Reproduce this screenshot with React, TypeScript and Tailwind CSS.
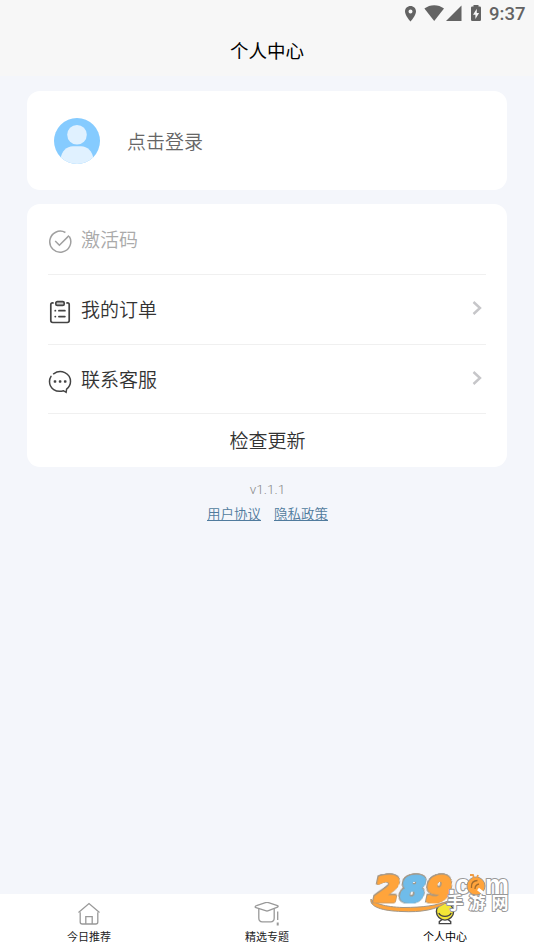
import type { ReactNode } from 'react';
import { clsx } from 'clsx';

/* ── status bar ──────────────────────────────────────────── */

function StatusBar() {
  return (
    <div className="flex h-7 justify-end">
      <svg className="h-7 w-[84px]" viewBox="0 0 84 28" fill="#636363">
        <path
          fillRule="evenodd"
          d="M10.5 6C7.4 6 5 8.4 5 11.4c0 4 5.5 10.1 5.5 10.1S16 15.400 16 11.400C16 8.400 13.600 6 10.500 6Zm0 3.500a2 2 0 1 1 0 4 2 2 0 0 1 0-4Z"
        />
        <path d="M24.400 8.600C30 4 38.400 4 44 8.600L34.200 21Z" />
        <path d="M61.500 5.500V21H46Z" />
        <path
          fillRule="evenodd"
          d="M73.500 5h5v1.600h1.300q1.200 0 1.200 1.200v12q0 1.200-1.200 1.200h-7.600q-1.200 0-1.200-1.200v-12q0-1.200 1.200-1.200h1.300ZM76.800 8.800l-3.800 6h2.400v4.200l3.700-6h-2.300Z"
        />
      </svg>
      <span className="w-[50px] pt-[1px] pl-[5px] font-['Roboto',sans-serif] text-[18.500px] leading-[27px] font-medium text-[#636363]">
        9:37
      </span>
    </div>
  );
}

/* ── icons ───────────────────────────────────────────────── */

function Avatar() {
  return (
    <svg className="size-[46px]" viewBox="0 0 46 46">
      <defs>
        <clipPath id="avatar">
          <circle cx="23" cy="23" r="23" />
        </clipPath>
      </defs>
      <g clipPath="url(#avatar)">
        <rect width="46" height="46" fill="#85cbff" />
        <circle cx="23" cy="16.700" r="9.800" fill="#e0f1ff" />
        <path d="M6.500 41c1-8 6-12.800 12.500-12.800h8c6.500 0 11.500 4.800 12.500 12.800v6h-33Z" fill="#e0f1ff" />
      </g>
    </svg>
  );
}

function CheckIcon() {
  return (
    <svg className="size-6" viewBox="0 0 24 24" fill="none" stroke="#a0a0a0" strokeWidth="1.500">
      <path d="M17.400 2.500A10.500 10.500 0 1 0 21.300 6.300" />
      <path d="m7.200 11 4.200 4.200L21 5.600" />
    </svg>
  );
}

function OrderIcon() {
  return (
    <svg className="size-6" viewBox="0 0 24 24" fill="none" stroke="#444" strokeWidth="1.700" strokeLinecap="round">
      <path d="M5 2.900H4.500Q2.800 2.900 2.800 4.600v16q0 1.900 1.900 1.900h14.600q1.900 0 1.900-1.900v-16q0-1.700-1.700-1.700H19" />
      <rect x="7.800" y="1.600" width="8.400" height="3.800" rx="1.500" fill="#ccc" />
      <path d="M7.200 10.700h.2M10.900 10.700h6M7.200 16.600h.2M10.900 16.600h6" />
    </svg>
  );
}

function ServiceIcon() {
  return (
    <svg className="size-6" viewBox="0 0 24 24" fill="none" stroke="#444" strokeWidth="1.500" strokeLinecap="round">
      <path d="M5.600 3.800C13 -1.500 22.500 3.500 22.500 11.600c0 3.200-1.400 5.600-3.900 7.600l-.5 3.100-2.600-1.600C8 22.900 1.500 18.500 1.500 11.600c0-2 .5-3.800 1.500-5.300" />
      <g fill="#444" stroke="none">
        <rect x="5.700" y="10.200" width="2.600" height="2.600" rx=".8" />
        <rect x="10.800" y="10.200" width="2.600" height="2.600" rx=".8" />
        <rect x="15.900" y="10.200" width="2.600" height="2.600" rx=".8" />
      </g>
    </svg>
  );
}

function HomeIcon() {
  return (
    <svg className="h-6 w-7" viewBox="0 0 28 24" fill="none" stroke="#999" strokeWidth="1.300">
      <path d="M3.500 10.500 14 1.600l10.500 8.900" />
      <path d="M5.200 10.300V20q0 2 2 2h13.600q2 0 2-2v-9.700" />
      <path d="M10.800 22v-7.300h6.400V22" />
    </svg>
  );
}

function TopicIcon() {
  return (
    <svg className="h-6 w-7" viewBox="0 0 28 24" fill="none" stroke="#999" strokeWidth="1.300" strokeLinejoin="round">
      <path d="M2.200 5.100Q2 4.100 3.500 3.700L12.500.7q1.500-.5 3 0l9 3q1.300.5 0 1.500L15.500 8.700q-1.500.6-3 0L3 5.700Q2.400 5.500 2.200 5.100Z" />
      <path d="M5.800 6.700V16q0 3.800 3.500 3.800h8.400q3.500 0 3.500-3.800V6.700" />
      <path d="M24.700 9.500v8.500" />
      <path d="M24.700 20.500v3" strokeWidth="2" />
    </svg>
  );
}

function ProfileIcon() {
  return (
    <svg className="h-6 w-7" viewBox="0 0 28 24" fill="none" stroke="#444" strokeWidth="1.400">
      <path d="M11 17.500 8.300 19.600v2h11.400v-2L17 17.500" fill="#fff" />
      <circle cx="14" cy="9.500" r="8.600" fill="#f2e636" />
      <path d="M7.800 11c2.200 4.500 10.200 4.500 12.400 0" />
    </svg>
  );
}

function Chevron() {
  return (
    <svg className="h-4 w-3" viewBox="0 0 12 16" fill="none" stroke="#c6c6c9" strokeWidth="2.400">
      <path d="m2.500 2 6.500 6-6.500 6" />
    </svg>
  );
}

/* ── watermark ───────────────────────────────────────────── */

function Watermark() {
  return (
    <svg className="absolute top-[866px] left-[364px] h-[54px] w-[154px]" viewBox="0 0 154 54">
      <path
        d="M7 33c2 4 14 8 32 8.500 20 0 34-2 45-6.500-10 9-28 11.500-46 10.500C19 45 5 41 7 33Z"
        fill="#ffa43b"
        stroke="#a39685"
      />
      <g strokeLinejoin="round" paintOrder="stroke">
        <g
          transform="translate(8 35.500) skewX(-12)"
          fontFamily="'DejaVu Sans', sans-serif"
          fontWeight="700"
          fontSize="34"
          strokeWidth="3"
          className="[filter:drop-shadow(.7px_0_0_#a39685)_drop-shadow(-.7px_0_0_#a39685)_drop-shadow(0_.7px_0_#a39685)_drop-shadow(0_-.7px_0_#a39685)]"
        >
          <text x="0" y="0" fill="#ffa43b" stroke="#ffa43b" textLength="25" lengthAdjust="spacingAndGlyphs">2</text>
          <text x="26" y="0" fill="#6fbcea" stroke="#6fbcea" textLength="25" lengthAdjust="spacingAndGlyphs">8</text>
          <text x="52" y="0" fill="#ffa43b" stroke="#ffa43b" textLength="25" lengthAdjust="spacingAndGlyphs">9</text>
        </g>
        <g
          fontFamily="'Liberation Sans', sans-serif"
          fontSize="27"
          fill="#fff"
          stroke="#999"
          strokeWidth="2.200"
          fontWeight="700"
        >
          <text x="84" y="28" textLength="22" lengthAdjust="spacingAndGlyphs">.c</text>
          <text x="121" y="28" textLength="24" lengthAdjust="spacingAndGlyphs">m</text>
        </g>
        <g
          fontFamily="'Noto Sans CJK SC', sans-serif"
          fontSize="17"
          fontWeight="700"
          fill="#fff"
          stroke="#999"
          strokeWidth="2"
        >
          <text x="82.500" y="42.500">手</text>
          <text x="104.500" y="42.500">游</text>
          <text x="127.500" y="42.500">网</text>
        </g>
      </g>
      <circle cx="112" cy="20" r="9" fill="#ffa43b" stroke="#a39685" />
      <path d="M107.500 22v-2q0-5 6-5.500m-2.500 8.500q0-4 4-5" fill="none" stroke="#a36c2c" strokeWidth="1.300" />
      <path d="m114 23 5 4" stroke="#fff" strokeWidth="3" />
      <path d="m110 12-1-3h-3m7 3 1-3" fill="none" stroke="#ef9d45" strokeWidth="1.800" />
    </svg>
  );
}

/* ── page ────────────────────────────────────────────────── */

interface MenuRowProps {
  icon: ReactNode;
  label: string;
  disabled?: boolean;
}

function MenuRow({ icon, label, disabled }: MenuRowProps) {
  return (
    <div className="flex h-[69.700px] items-center border-b border-[#f0f0f0]">
      <div className="mt-[5px]">{icon}</div>
      <span
        className={clsx(
          'ml-[9px] flex-1 pt-[4px] text-[19px]',
          disabled ? 'text-[#aaa]' : 'text-[#333]',
        )}
      >
        {label}
      </span>
      {!disabled && <div className="mr-[3px] pb-[3px]"><Chevron /></div>}
    </div>
  );
}

const tabs = [
  { label: '今日推荐', icon: <HomeIcon />, active: false },
  { label: '精选专题', icon: <TopicIcon />, active: false },
  { label: '个人中心', icon: <ProfileIcon />, active: true },
];

export default function App() {
  return (
    <div className="relative flex h-[950px] w-[534px] flex-col overflow-hidden bg-[#f4f6fb] font-['Roboto','Noto_Sans_CJK_SC',sans-serif] font-[350]">
      <header className="h-[76px] bg-[#f7f7f7]">
        <StatusBar />
        <h1 className="pt-[2px] text-center text-[18.500px] leading-[44px] font-normal text-black">个人中心</h1>
      </header>

      <main className="flex-1 px-[27px] pt-[15px]">
        <section className="flex h-[99px] items-center rounded-[13px] bg-white pl-[27px]">
          <Avatar />
          <span className="ml-[27px] pt-[5px] text-[19px] text-[#666]">点击登录</span>
        </section>

        <section className="mt-[14px] h-[263px] rounded-[13px] bg-white px-[21px] pt-[1.300px]">
          <MenuRow icon={<CheckIcon />} label="激活码" disabled />
          <MenuRow icon={<OrderIcon />} label="我的订单" />
          <MenuRow icon={<ServiceIcon />} label="联系客服" />
          <div className="pt-px pl-px text-center text-[19px] leading-[53px] text-[#333]">检查更新</div>
        </section>

        <p className="mt-[13px] pl-px text-center text-[13.500px] leading-[18px] text-[#888]">v1.1.1</p>
        <div className="mt-[6px] flex justify-center gap-[13px] pl-px text-[13.500px] leading-5 text-[#507b9d] underline">
          <span>用户协议</span>
          <span>隐私政策</span>
        </div>
      </main>

      <nav className="grid h-14 grid-cols-3 bg-white">
        {tabs.map((tab) => (
          <div key={tab.label} className="flex flex-col items-center pt-[8px]">
            {tab.icon}
            <span
              className={clsx(
                'mt-[4px] text-[11px] leading-4 font-normal',
                tab.active ? 'text-black' : 'text-[#222]',
              )}
            >
              {tab.label}
            </span>
          </div>
        ))}
      </nav>

      <Watermark />
    </div>
  );
}
